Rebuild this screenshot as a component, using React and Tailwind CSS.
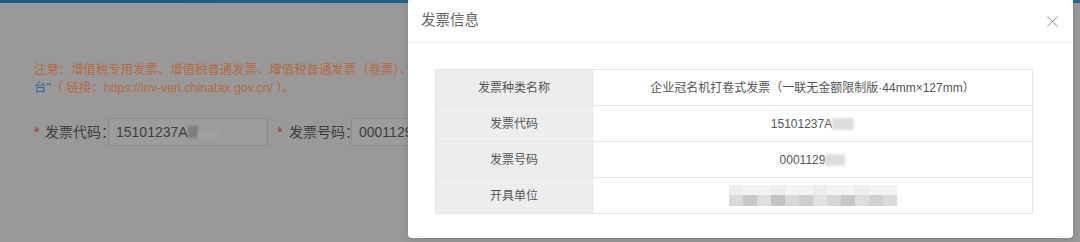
import React from 'react';
import { X } from 'lucide-react';

const ROWS = [
  { label: '发票种类名称', value: '企业冠名机打卷式发票（一联无金额限制版·44mm×127mm）' },
  { label: '发票代码', value: '15101237A', blur: 'w-[22px]' },
  { label: '发票号码', value: '0001129', blur: 'w-[20px]' },
  { label: '开具单位', value: '', pixels: true },
];

function Blur({ className }) {
  return <span className={`inline-block h-[12px] align-middle bg-[#dcdcdc] blur-[1.5px] ${className}`} />;
}

function PixelBlock() {
  const shades = ['#d6d6d6', '#c4c4c4', '#dadada', '#bdbdbd', '#d4d4d4', '#c9c9c9', '#dedede', '#d2d2d2', '#c2c2c2', '#d9d9d9', '#cbcbcb', '#d6d6d6'];
  return (
    <div className="flex flex-col opacity-90">
      <div className="flex h-[10px]">
        {shades.map((c, i) => (
          <span key={i} className="w-[14px]" style={{ background: i % 3 === 0 ? '#ececec' : '#f2f2f2' }} />
        ))}
      </div>
      <div className="flex h-[11px]">
        {shades.map((c, i) => (
          <span key={i} className="w-[14px]" style={{ background: c }} />
        ))}
      </div>
    </div>
  );
}

export default function App() {
  return (
    <div className="relative w-[1080px] h-[242px] overflow-hidden bg-[#999999] font-['Liberation_Sans','Noto_Sans_CJK_SC',sans-serif]">
      {/* page under the overlay */}
      <div className="h-[3px] bg-gradient-to-r from-[#1e5b86] to-[#236a99]" />
      <div className="pl-[34px] pt-[58px]">
        <div className="w-[1046px] overflow-hidden text-[12.4px] leading-[18px] text-[#b8693a] whitespace-nowrap">
          注意：增值税专用发票、增值税普通发票、增值税普通发票（卷票）、增值税电子普通发票、机动车销售统一发票、二手车销售统一发票请通过"国家税务总局全国增值税发票查验平台查验平
        </div>
        <div className="text-[12.4px] leading-[18px] text-[#b8693a] whitespace-nowrap">
          <span className="text-[#2f6894]">台"</span>（ 链接：https://inv-veri.chinatax.gov.cn/ ）。
        </div>

        <div className="flex items-center mt-[21px] h-[28px] text-[14px] text-[#3e3e3e]">
          <span className="text-[#a33434] w-[11px]">*</span>
          <span className="w-[63px] whitespace-nowrap">发票代码：</span>
          <div className="w-[160px] h-[28px] flex items-center px-[7px] bg-[#9c9c9c] border border-[#8b8b8b] rounded-[2px]">
            15101237A
            <span className="inline-block w-[10px] h-[12px] bg-[#7d7d7d] blur-[1px]" />
            <span className="inline-block w-[22px] h-[8px] mt-[6px] bg-[#9f9f9f] blur-[1px]" />
          </div>
          <span className="text-[#a33434] w-[12px] ml-[9px]">*</span>
          <span className="w-[62px] whitespace-nowrap">发票号码：</span>
          <div className="w-[160px] h-[28px] flex items-center px-[7px] bg-[#9c9c9c] border border-[#8b8b8b] rounded-[2px]">
            00011292
          </div>
        </div>
      </div>

      {/* modal */}
      <div className="absolute left-[408px] top-0 w-[665px] h-[238px] bg-white rounded-b-[4px] shadow-[0_2px_8px_rgba(0,0,0,0.15)]">
        <div className="h-[43px] flex items-center justify-between pl-[13px] pr-[11px] border-b border-[#ececec]">
          <span className="text-[14.5px] text-[#666]">发票信息</span>
          <X size={19} strokeWidth={1.3} className="text-[#9a9a9a]" />
        </div>
        <div className="pt-[26px] pl-[27px]">
          <div className="w-[598px] border-t border-l border-[#e6e6e6] text-[12px] text-[#555]">
            {ROWS.map((r) => (
              <div key={r.label} className="flex h-[36px] border-b border-[#e6e6e6]">
                <div className="w-[157px] flex items-center justify-center bg-[#ededed] border-r border-[#e6e6e6]">
                  {r.label}
                </div>
                <div className="flex-1 flex items-center justify-center border-r border-[#e6e6e6] bg-white">
                  {r.pixels ? (
                    <PixelBlock />
                  ) : (
                    <>
                      <span>{r.value}</span>
                      {r.blur && <Blur className={r.blur} />}
                    </>
                  )}
                </div>
              </div>
            ))}
          </div>
        </div>
      </div>
    </div>
  );
}
